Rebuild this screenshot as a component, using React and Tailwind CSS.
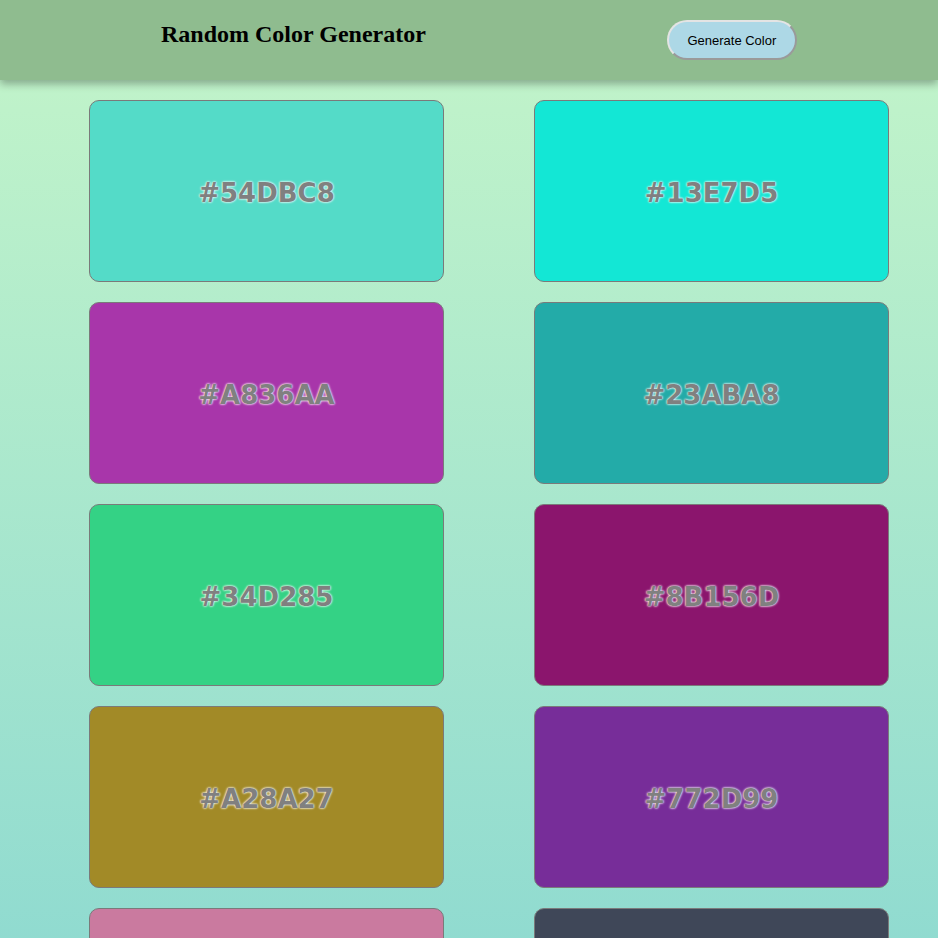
import React from "react";

const colors = [
  "#54DBC8", "#13E7D5",
  "#A836AA", "#23ABA8",
  "#34D285", "#8B156D",
  "#A28A27", "#772D99",
  "#CA7A9F", "#3F4758",
];

export default function App() {
  return (
    <div className="min-h-[1120px] bg-linear-to-b from-[#c4f5c9] to-[#86d6d1]">
      <header className="relative z-10 flex h-[80px] items-start bg-[#8fbc8f] shadow-[0_4px_8px_rgba(0,0,0,0.3)]">
        <h1 className="ml-[161px] mt-[19px] font-['Liberation_Serif',serif] text-[24px] font-bold leading-[30px] text-black">
          Random Color Generator
        </h1>
        <button className="ml-[241px] mt-[20px] h-[40px] w-[130px] rounded-full border-2 border-t-[#e4e4e4] border-l-[#e4e4e4] border-b-[#9a9a9a] border-r-[#9a9a9a] bg-[#add8e6] pt-[2px] font-['Liberation_Sans',sans-serif] text-[13px] text-black">
          Generate Color
        </button>
      </header>
      <main className="grid grid-cols-[355px_355px] gap-x-[90px] gap-y-[20px] pl-[89px] pt-[20px]">
        {colors.map((c) => (
          <div
            key={c}
            className="flex h-[182px] items-center justify-center rounded-[10px] border border-[#7a7a7a] pt-[4px]"
            style={{ backgroundColor: c }}
          >
            <span className="font-['DejaVu_Sans',sans-serif] text-[26px] font-bold text-[#808080] [text-shadow:0_0_2px_rgba(255,255,255,0.8),0_0_2px_rgba(255,255,255,0.8),0_0_3px_rgba(255,255,255,0.6)]">
              {c}
            </span>
          </div>
        ))}
      </main>
    </div>
  );
}
